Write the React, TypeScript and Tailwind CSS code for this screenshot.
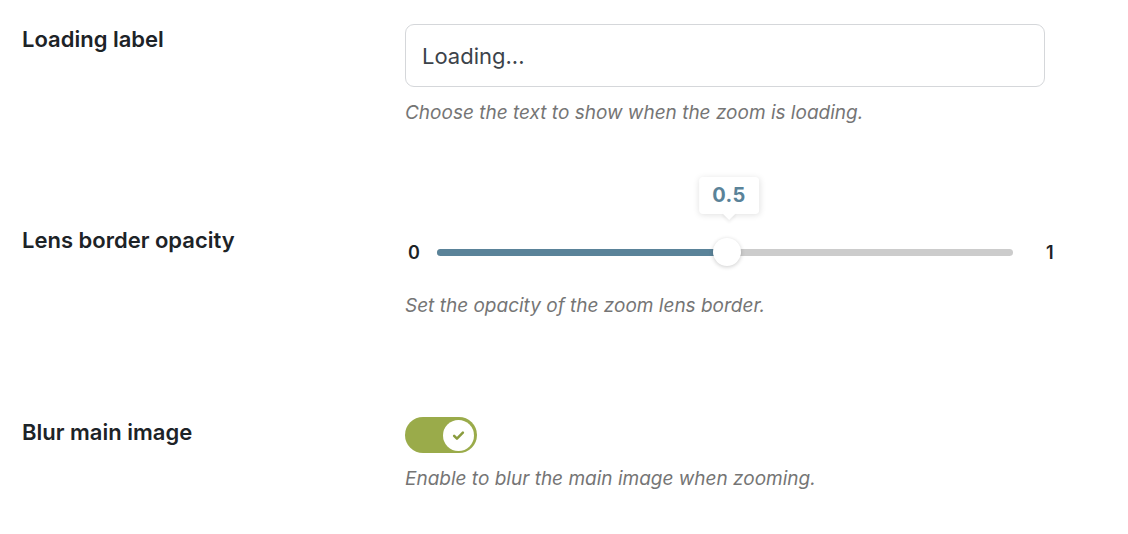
import React, { useState } from 'react';

const font = { fontFamily: 'Inter, "Noto Sans", sans-serif' };

const SettingRow: React.FC<{ label: string; className?: string; labelClass?: string; children: React.ReactNode }> = ({
  label,
  className,
  labelClass,
  children,
}) => (
  <div className={`flex ${className ?? ''}`}>
    <div className={`w-[383px] shrink-0 text-[22px] leading-[28px] font-semibold text-[#1d2327] ${labelClass ?? ''}`}>{label}</div>
    <div className="flex-1">{children}</div>
  </div>
);

const HelpText: React.FC<{ children: React.ReactNode; className?: string }> = ({ children, className }) => (
  <p className={`text-[19px] leading-[26px] italic text-[#757575] ${className ?? ''}`}>{children}</p>
);

const OpacitySlider: React.FC<{ value: number }> = ({ value }) => {
  const pct = value * 100;
  return (
    <div className="flex items-center h-[28px] w-[650px]">
      <span className="w-[32px] pl-[3px] text-[18px] font-semibold text-[#1d2327]">0</span>
      <div className="relative w-[576px] h-[7px] rounded-full bg-[#cccccc]">
        <div className="absolute left-0 top-0 h-full rounded-full bg-[#5a8399]" style={{ width: `${pct}%` }} />
        <div
          className="absolute top-1/2 -translate-x-1/2 -translate-y-1/2 w-[28px] h-[28px] rounded-full bg-white shadow-[0_1px_4px_rgba(0,0,0,0.2)]"
          style={{ left: `calc(${pct}% + 2px)` }}
        />
        <div
          className="absolute bottom-[38px] -translate-x-1/2 flex flex-col items-center"
          style={{ left: `calc(${pct}% + 4px)` }}
        >
          <div className="px-[13px] h-[37px] flex items-center rounded bg-white shadow-[0_1px_6px_rgba(0,0,0,0.12)] text-[20px] font-bold tracking-[0.5px] text-[#5a8399]">
            {value}
          </div>
          <div className="w-[10px] h-[10px] bg-white rotate-45 -mt-[6px] shadow-[2px_2px_3px_rgba(0,0,0,0.06)]" />
        </div>
      </div>
      <span className="ml-[33px] text-[18px] font-semibold text-[#1d2327]">1</span>
    </div>
  );
};

const Toggle: React.FC<{ on: boolean; onChange: (v: boolean) => void }> = ({ on, onChange }) => (
  <button
    type="button"
    onClick={() => onChange(!on)}
    className={`flex items-center w-[72px] h-[36px] -mt-[1px] rounded-full px-[3px] ${on ? 'bg-[#9aab4a] justify-end' : 'bg-[#cccccc] justify-start'}`}
  >
    <span className="w-[31px] h-[31px] rounded-full bg-white flex items-center justify-center">
      {on && (
        <svg width="15" height="15" viewBox="0 0 24 24" fill="none" stroke="#8a9c3e" strokeWidth="4" strokeLinecap="round" strokeLinejoin="round">
          <path d="M5 12.5l4.5 4.5L19 7.5" />
        </svg>
      )}
    </span>
  </button>
);

export default function App() {
  const [label, setLabel] = useState('Loading...');
  const [blur, setBlur] = useState(true);

  return (
    <div className="w-[1128px] h-[534px] bg-white pl-[22px] pt-[24px]" style={font}>
      <SettingRow label="Loading label" labelClass="pt-[1px]">
        <input
          type="text"
          value={label}
          onChange={(e) => setLabel(e.target.value)}
          className="block w-[640px] h-[63px] px-[16px] border border-[#d5d7da] rounded-[9px] text-[22px] text-[#3c434a] focus:outline-none"
        />
        <HelpText className="mt-[13px]">Choose the text to show when the zoom is loading.</HelpText>
      </SettingRow>

      <SettingRow label="Lens border opacity" className="mt-[100px]">
        <div className="pt-[12px]">
          <OpacitySlider value={0.5} />
        </div>
        <HelpText className="mt-[27px]">Set the opacity of the zoom lens border.</HelpText>
      </SettingRow>

      <SettingRow label="Blur main image" className="mt-[99px]">
        <Toggle on={blur} onChange={setBlur} />
        <HelpText className="mt-[13px]">Enable to blur the main image when zooming.</HelpText>
      </SettingRow>
    </div>
  );
}
